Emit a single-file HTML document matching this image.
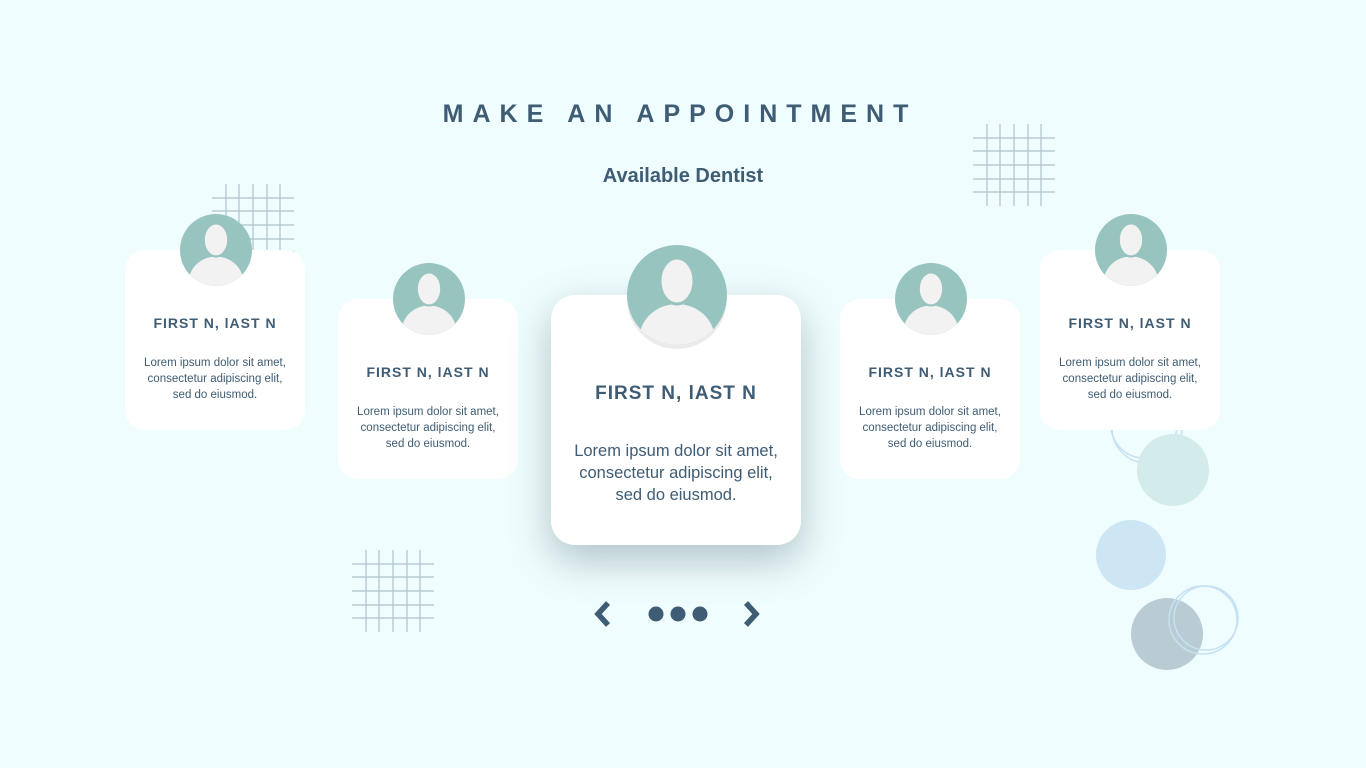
<!DOCTYPE html><html><head><style>
body{margin:0;width:1366px;height:768px;background:#effdfe;position:relative;overflow:hidden;font-family:"Liberation Sans",sans-serif;color:#3e5c74}
.a{position:absolute}
.card{position:absolute;background:#fff;border-radius:20px;text-align:center}
.nm{font-weight:bold;letter-spacing:1px;position:absolute;left:0;right:0}
.tx{position:absolute;left:0;right:0;line-height:16px;font-size:11.5px}
</style></head><body>
<div class="a" style="left:0;right:0;top:100px;text-align:center;font-size:25px;font-weight:bold;letter-spacing:9px;padding-right:6px">MAKE AN APPOINTMENT</div>
<div class="a" style="left:0;right:0;top:165px;text-align:center;font-size:20px;font-weight:bold">Available Dentist</div>
<svg class="a" style="left:0;top:0" width="1366" height="768">
<defs><g id="grid" stroke="#9fb5bf" stroke-width="1.2" opacity=".8"><path d="M14 0V82M27 0V82M41 0V82M55 0V82M68 0V82M0 14H82M0 27H82M0 41H82M0 55H82M0 68H82"/></g></defs>
<use href="#grid" x="212" y="184"/><use href="#grid" x="973" y="124"/><use href="#grid" x="352" y="550"/>
<circle cx="1147" cy="428" r="35" fill="none" stroke="#c6e1f2" stroke-width="1.5"/>
<circle cx="1144" cy="425" r="33" fill="none" stroke="#c6e1f2" stroke-width="1.5"/>
<circle cx="1173" cy="470" r="36" fill="#d3ebeb"/>
<circle cx="1131" cy="555" r="35" fill="#cde6f4"/>
<circle cx="1167" cy="634" r="36" fill="#b9ccd4"/>
<circle cx="1203" cy="620" r="34" fill="none" stroke="#c6e1f2" stroke-width="1.5"/>
<circle cx="1206" cy="618" r="32" fill="none" stroke="#c6e1f2" stroke-width="1.5"/>
</svg>
<div class="card" style="left:125px;top:250px;width:180px;height:180px"><div class="nm" style="top:65px;font-size:14px">FIRST N, lAST N</div><div class="tx" style="top:105px">Lorem ipsum dolor sit amet,<br>consectetur adipiscing elit,<br>sed do eiusmod.</div></div>
<div class="card" style="left:338px;top:299px;width:180px;height:180px"><div class="nm" style="top:65px;font-size:14px">FIRST N, lAST N</div><div class="tx" style="top:105px">Lorem ipsum dolor sit amet,<br>consectetur adipiscing elit,<br>sed do eiusmod.</div></div>
<div class="card" style="left:840px;top:299px;width:180px;height:180px"><div class="nm" style="top:65px;font-size:14px">FIRST N, lAST N</div><div class="tx" style="top:105px">Lorem ipsum dolor sit amet,<br>consectetur adipiscing elit,<br>sed do eiusmod.</div></div>
<div class="card" style="left:1040px;top:250px;width:180px;height:180px"><div class="nm" style="top:65px;font-size:14px">FIRST N, lAST N</div><div class="tx" style="top:105px">Lorem ipsum dolor sit amet,<br>consectetur adipiscing elit,<br>sed do eiusmod.</div></div>
<div class="card" style="left:551px;top:295px;width:250px;height:250px;border-radius:24px;box-shadow:0 15px 40px rgba(60,90,100,.35)"><div class="nm" style="top:88px;font-size:19px">FIRST N, lAST N</div><div class="tx" style="top:145px;font-size:16.5px;line-height:22px">Lorem ipsum dolor sit amet,<br>consectetur adipiscing elit,<br>sed do eiusmod.</div></div>
<svg class="a" style="left:0;top:0" width="1366" height="768">
<defs>
<clipPath id="c" clipPathUnits="userSpaceOnUse"><circle cx="0" cy="0" r="50"/></clipPath>
<g id="av"><circle r="50" fill="#98c4c0"/><g clip-path="url(#c)"><ellipse cx="0" cy="45" rx="38" ry="36" fill="#f2f2f2"/><ellipse cx="0" cy="-14" rx="17" ry="23" fill="#f2f2f2" stroke="#98c4c0" stroke-width="3"/></g></g></defs>
<use href="#av" transform="translate(216 250) scale(.72)"/>
<use href="#av" transform="translate(429 299) scale(.72)"/>
<use href="#av" transform="translate(931 299) scale(.72)"/>
<use href="#av" transform="translate(1131 250) scale(.72)"/>
<circle cx="677" cy="299" r="50" fill="rgba(0,0,0,.08)"/>
<use href="#av" transform="translate(677 295)"/>
<path d="M608 603 L598 614 L608 625" fill="none" stroke="#3e5c74" stroke-width="5.5" stroke-linejoin="miter"/>
<path d="M746 603 L756 614 L746 625" fill="none" stroke="#3e5c74" stroke-width="5.5" stroke-linejoin="miter"/>
<circle cx="656" cy="614" r="7.5" fill="#3e5c74"/><circle cx="678" cy="614" r="7.5" fill="#3e5c74"/><circle cx="700" cy="614" r="7.5" fill="#3e5c74"/>
</svg>
</body></html>
